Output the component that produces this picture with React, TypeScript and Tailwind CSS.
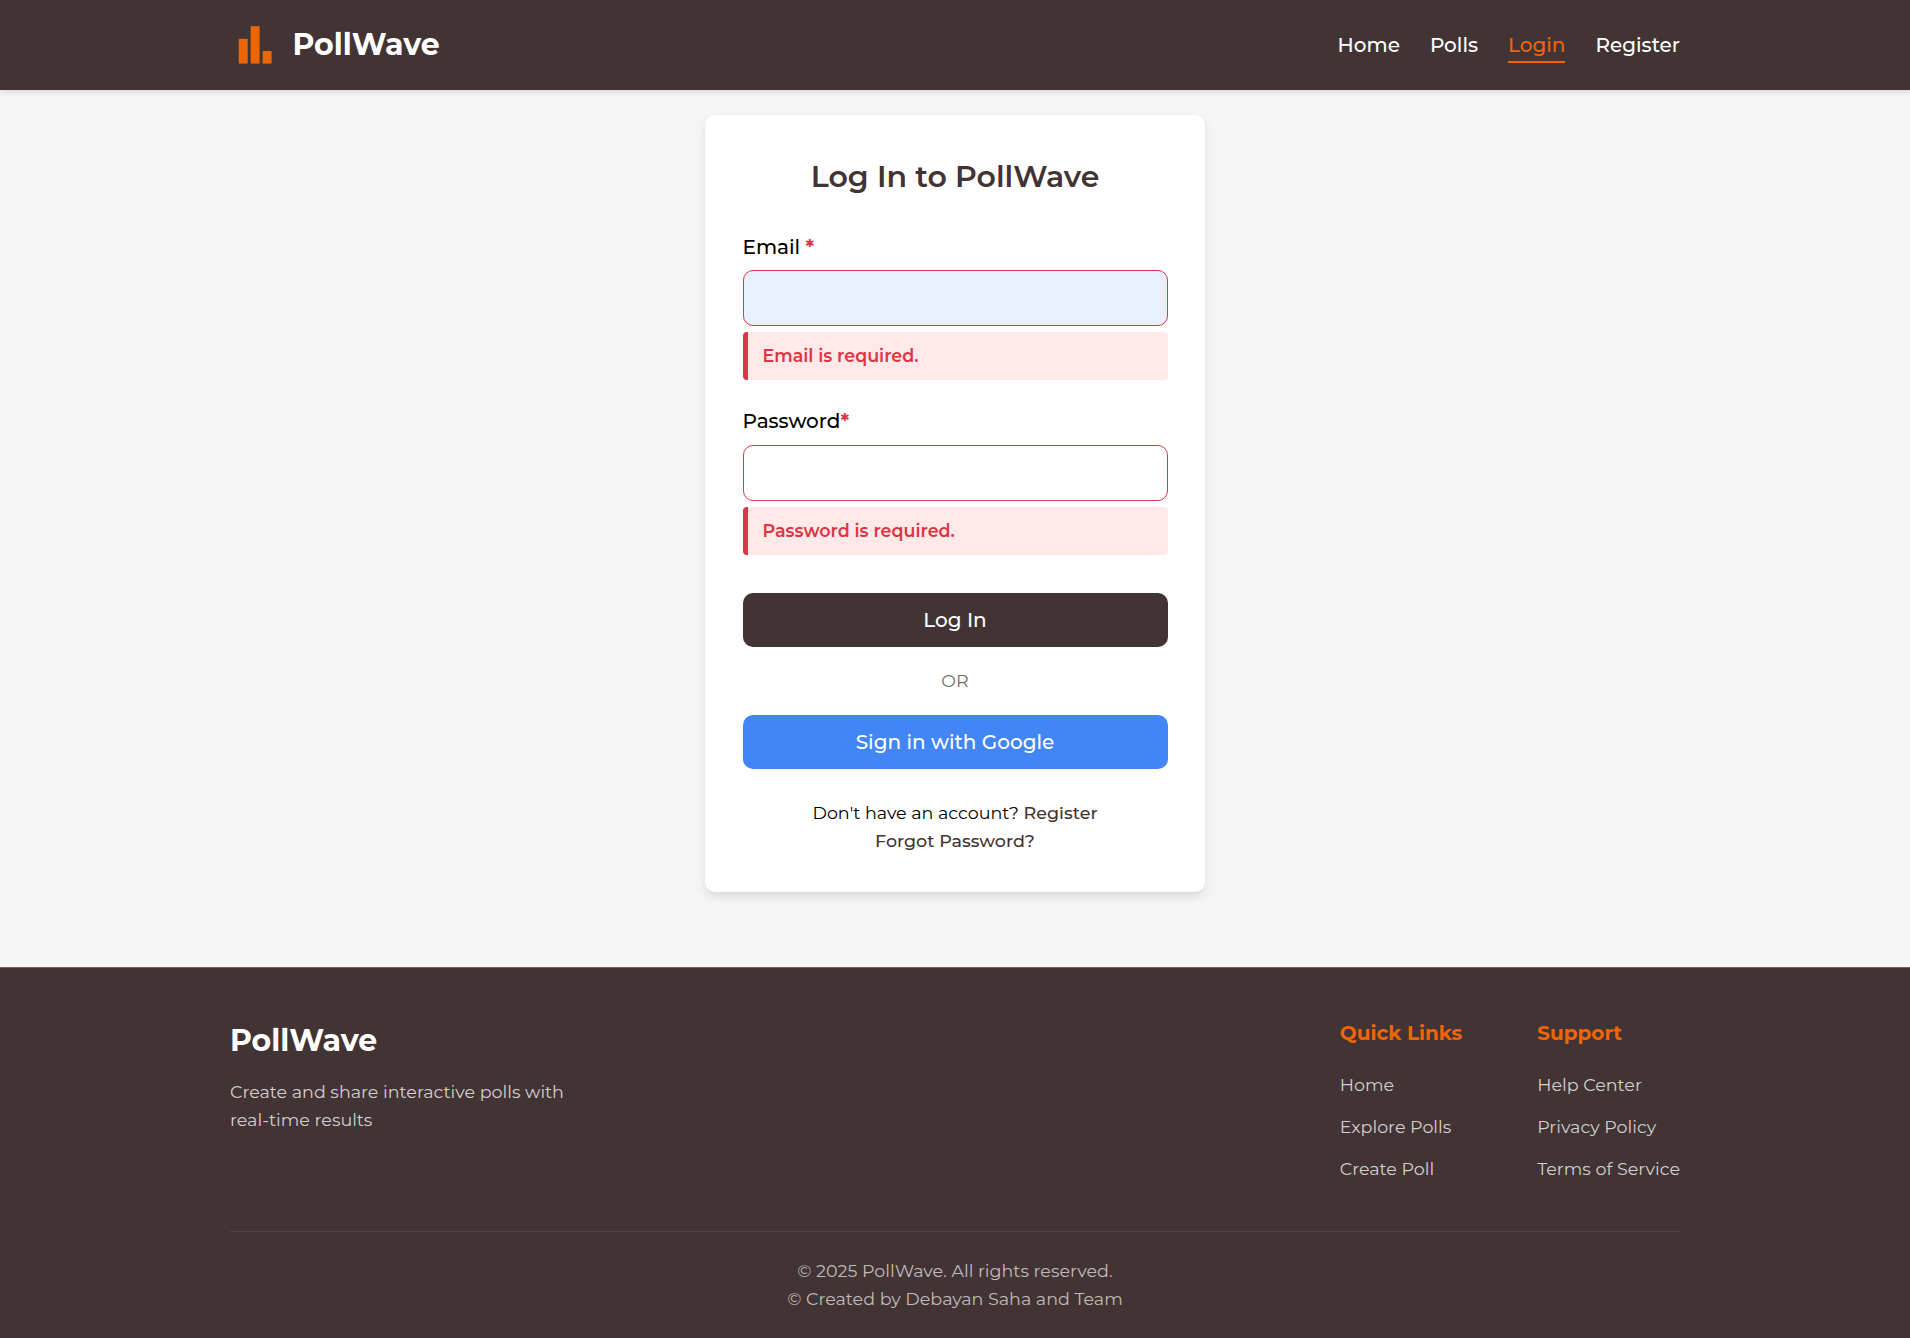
const quickLinks = ["Home", "Explore Polls", "Create Poll"];
const supportLinks = ["Help Center", "Privacy Policy", "Terms of Service"];
const navLinks = ["Home", "Polls", "Login", "Register"];

function Logo() {
  return (
    <svg width="50" height="50" viewBox="0 0 50 50" className="text-[#ec6608]" fill="currentColor">
      <rect x="8.7" y="18.8" width="9" height="24.8" />
      <rect x="20.6" y="6.2" width="9" height="37.4" />
      <rect x="32.6" y="31" width="9" height="12.6" />
    </svg>
  );
}

function Header() {
  return (
    <header className="h-[90px] bg-[#423334] shadow-[0_2.5px_5px_rgba(0,0,0,0.1)]">
      <div className="mx-auto flex h-full w-[1450px] items-center justify-between">
        <a className="flex items-center gap-[12.5px]">
          <Logo />
          <span className="text-[30px] leading-[48px] font-bold text-white">PollWave</span>
        </a>
        <nav className="flex gap-[30px]">
          {navLinks.map((label) => (
            <a
              key={label}
              className={
                label === "Login"
                  ? "border-b-2 border-[#ec6608] pt-[2px] text-[20px] leading-[32px] font-medium text-[#ec6608]"
                  : "border-b-2 border-transparent pt-[2px] text-[20px] leading-[32px] font-medium text-white"
              }
            >
              {label}
            </a>
          ))}
        </nav>
      </div>
    </header>
  );
}

function FieldError({ children }: { children: string }) {
  return (
    <div className="mt-[6px] flex h-12 items-center rounded-[4px] border-l-[5px] border-[#dc3545] bg-[#fee9e8] pl-[15px] text-[17.5px] leading-[28px] font-semibold text-[#dc3545]">
      {children}
    </div>
  );
}

function LinkColumn({ title, links }: { title: string; links: string[] }) {
  return (
    <div>
      <h4 className="mb-[22.5px] text-[20px] leading-[32px] font-bold text-[#ec6608]">{title}</h4>
      <ul className="flex flex-col gap-[14px]">
        {links.map((l) => (
          <li key={l} className="text-[17.5px] leading-[28px] text-[#d2cfcf]">
            {l}
          </li>
        ))}
      </ul>
    </div>
  );
}

export default function App() {
  return (
    <div className="flex min-h-[1338px] flex-col bg-[#f5f5f5] font-['Montserrat','Inter',sans-serif]">
      <Header />
      <main className="flex-1 pt-[25px]">
        <form className="mx-auto h-[777px] w-[500px] rounded-[10px] bg-white px-[37.5px] pt-[37.5px] shadow-[0_5px_10px_rgba(0,0,0,0.1)]">
          <h2 className="text-center text-[30px] leading-[48px] font-semibold text-[#423334]">Log In to PollWave</h2>
          <label className="mt-[30.5px] block text-[20px] leading-[32px] font-medium text-black">
            Email <span className="font-bold text-[#dc3545]">*</span>
          </label>
          <input className="mt-[7px] block h-14 w-full rounded-[10px] border border-[#dc3545] bg-[#e8f0fe] px-4" />
          <FieldError>Email is required.</FieldError>
          <label className="mt-[25px] block text-[20px] leading-[32px] font-medium text-black">
            Password<span className="font-bold text-[#dc3545]">*</span>
          </label>
          <input
            type="password"
            className="mt-[8px] block h-14 w-full rounded-[10px] border border-[#dc3545] bg-white px-4"
          />
          <FieldError>Password is required.</FieldError>
          <button
            type="button"
            className="mt-[38px] block h-[54px] w-full rounded-[10px] bg-[#423334] text-[20px] font-medium text-white"
          >
            Log In
          </button>
          <p className="mt-[19.5px] text-center text-[17.5px] leading-[28px] text-[#6f6f6f]">OR</p>
          <button
            type="button"
            className="mt-[20.5px] block h-[54px] w-full rounded-[10px] bg-[#4285f4] text-[20px] font-medium text-white"
          >
            Sign in with Google
          </button>
          <div className="mt-[29.5px] text-center text-[17.5px] leading-[28px] text-black">
            <p>
              Don't have an account? <a className="font-medium text-[#423334]">Register</a>
            </p>
            <p>
              <a className="font-medium text-[#423334]">Forgot Password?</a>
            </p>
          </div>
        </form>
      </main>
      <footer className="h-[371px] border-t border-[#6b5f60] bg-[#423334] pt-[48.5px]">
        <div className="mx-auto w-[1450px]">
          <div className="flex h-[214.5px] justify-between">
            <div className="w-[375px]">
              <h3 className="text-[30px] leading-[48px] font-bold text-white">PollWave</h3>
              <p className="mt-[13px] text-[17.5px] leading-[28px] text-[#d2cfcf]">
                Create and share interactive polls with real-time results
              </p>
            </div>
            <div className="flex gap-[75px]">
              <LinkColumn title="Quick Links" links={quickLinks} />
              <LinkColumn title="Support" links={supportLinks} />
            </div>
          </div>
          <div className="border-t border-[#504243] pt-[25px] text-center text-[17.5px] leading-[28px] text-[#c0bbbb]">
            <p>© 2025 PollWave. All rights reserved.</p>
            <p>© Created by Debayan Saha and Team</p>
          </div>
        </div>
      </footer>
    </div>
  );
}
